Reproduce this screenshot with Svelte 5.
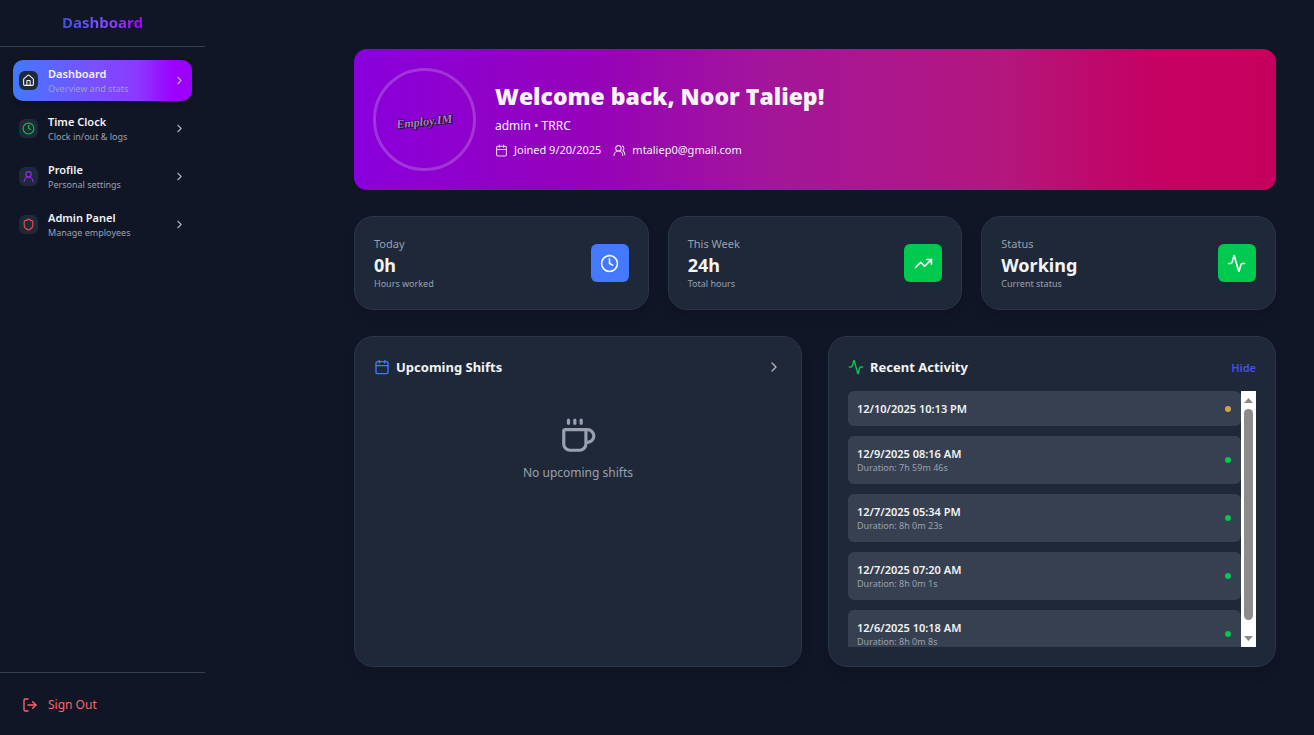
<script>
  import { onMount } from "svelte";

  let activePage = "Dashboard";
  let showActivity = true;

  let list;
  let viewHeight = 256;
  let fullHeight = 256;
  let scrolled = 0;

  const pages = [
    { name: "Dashboard", info: "Overview and stats", icon: "home", color: "white" },
    { name: "Time Clock", info: "Clock in/out & logs", icon: "clock", color: "green" },
    { name: "Profile", info: "Personal settings", icon: "user", color: "purple" },
    { name: "Admin Panel", info: "Manage employees", icon: "shield", color: "red" }
  ];

  const stats = [
    { label: "Today", value: "0h", info: "Hours worked", icon: "clock", color: "blue" },
    { label: "This Week", value: "24h", info: "Total hours", icon: "trend", color: "green" },
    { label: "Status", value: "Working", info: "Current status", icon: "activity", color: "green" }
  ];

  const logs = [
    { time: "12/10/2025 10:13 PM", duration: "" },
    { time: "12/9/2025 08:16 AM", duration: "7h 59m 46s" },
    { time: "12/7/2025 05:34 PM", duration: "8h 0m 23s" },
    { time: "12/7/2025 07:20 AM", duration: "8h 0m 1s" },
    { time: "12/6/2025 10:18 AM", duration: "8h 0m 8s" }
  ];

  const icons = {
    home: ["M15 21v-8a1 1 0 0 0-1-1h-4a1 1 0 0 0-1 1v8", "M3 10a2 2 0 0 1 .709-1.528l7-6a2 2 0 0 1 2.582 0l7 6A2 2 0 0 1 21 10v9a2 2 0 0 1-2 2H5a2 2 0 0 1-2-2z"],
    clock: ["M12 2a10 10 0 1 0 0 20a10 10 0 1 0 0-20", "M12 6v6l4 2"],
    user: ["M12 3a5 5 0 1 0 0 10a5 5 0 1 0 0-10", "M20 21a8 8 0 0 0-16 0"],
    shield: ["M20 13c0 5-3.500 7.500-7.660 8.950a1 1 0 0 1-.670-.010C7.500 20.500 4 18 4 13V6a1 1 0 0 1 1-1c2 0 4.500-1.200 6.240-2.720a1.170 1.170 0 0 1 1.520 0C14.510 3.810 17 5 19 5a1 1 0 0 1 1 1z"],
    trend: ["M16 7h6v6", "m22 7-8.500 8.500-5-5L2 17"],
    activity: ["M22 12h-2.480a2 2 0 0 0-1.930 1.460l-2.350 8.360a.250.250 0 0 1-.480 0L9.240 2.180a.250.250 0 0 0-.480 0l-2.350 8.360A2 2 0 0 1 4.490 12H2"],
    calendar: ["M8 2v4", "M16 2v4", "M5 4h14a2 2 0 0 1 2 2v14a2 2 0 0 1-2 2H5a2 2 0 0 1-2-2V6a2 2 0 0 1 2-2z", "M3 10h18"],
    users: ["M18 21a8 8 0 0 0-16 0", "M10 3a5 5 0 1 0 0 10a5 5 0 1 0 0-10", "M22 20c0-3.370-2-6.500-4-8a5 5 0 0 0-.450-8.300"],
    chevron: ["m9 18 6-6-6-6"],
    coffee: ["M10 2v2", "M14 2v2", "M6 2v2", "M16 8a1 1 0 0 1 1 1v8a4 4 0 0 1-4 4H7a4 4 0 0 1-4-4V9a1 1 0 0 1 1-1h14a4 4 0 1 1 0 8h-1"],
    logout: ["m16 17 5-5-5-5", "M21 12H9", "M9 21H5a2 2 0 0 1-2-2V5a2 2 0 0 1 2-2h4"]
  };

  function measure(){
    if (!list) return;
    viewHeight = list.clientHeight;
    fullHeight = list.scrollHeight;
    scrolled = list.scrollTop;
  }
  function scrollList(step){
    list.scrollTop += step;
  }
  function toggleActivity(){
    showActivity = !showActivity;
  }

  onMount(measure);
</script>

{#snippet icon(name)}
  <svg class="icon" viewBox="0 0 24 24" aria-hidden="true">
    {#each icons[name] as d}
      <path {d} />
    {/each}
  </svg>
{/snippet}

<div class="layout">
  <aside class="sidebar">
    <div class="brand"><span>Dashboard</span></div>

    <nav>
      {#each pages as page}
        <button class="navitem" class:active={activePage == page.name} on:click={() => activePage = page.name}>
          <span class="navicon {page.color}">{@render icon(page.icon)}</span>
          <span class="navtext">
            <strong>{page.name}</strong>
            <small>{page.info}</small>
          </span>
          <span class="navarrow">{@render icon("chevron")}</span>
        </button>
      {/each}
    </nav>

    <div class="signout">
      <button>{@render icon("logout")}Sign Out</button>
    </div>
  </aside>

  <main>
    <section class="banner">
      <div class="avatar">
        <svg viewBox="0 0 96 96" role="img" aria-label="Employ.IM">
          <text class="logoshadow" x="49" y="55" transform="rotate(-6 48 52)">Employ.IM</text>
          <text class="logo" x="48" y="54" transform="rotate(-6 48 52)">Employ.IM</text>
        </svg>
      </div>
      <div class="welcome">
        <h1>Welcome back, Noor Taliep!</h1>
        <p class="role">admin • TRRC</p>
        <div class="meta">
          <span>{@render icon("calendar")}Joined 9/20/2025</span>
          <span>{@render icon("users")}mtaliep0@gmail.com</span>
        </div>
      </div>
    </section>

    <section class="stats">
      {#each stats as stat}
        <div class="card stat">
          <div>
            <p class="label">{stat.label}</p>
            <p class="value">{stat.value}</p>
            <p class="info">{stat.info}</p>
          </div>
          <span class="badge {stat.color}">{@render icon(stat.icon)}</span>
        </div>
      {/each}
    </section>

    <section class="panels">
      <div class="card panel">
        <header>
          <h2 class="shifts">{@render icon("calendar")}Upcoming Shifts</h2>
          <button class="more" aria-label="View shifts">{@render icon("chevron")}</button>
        </header>
        <div class="empty">
          {@render icon("coffee")}
          <p>No upcoming shifts</p>
        </div>
      </div>

      <div class="card panel">
        <header>
          <h2 class="recent">{@render icon("activity")}Recent Activity</h2>
          <button class="hide" on:click={toggleActivity}>{showActivity ? "Hide" : "Show"}</button>
        </header>
        {#if showActivity}
          <div class="scroller">
            <ul bind:this={list} on:scroll={measure}>
              {#each logs as log}
                <li>
                  <div>
                    <p class="time">{log.time}</p>
                    {#if log.duration}
                      <p class="duration">Duration: {log.duration}</p>
                    {/if}
                  </div>
                  <span class="dot" class:open={!log.duration}></span>
                </li>
              {/each}
            </ul>
            <div class="scrollbar">
              <button aria-label="Scroll up" on:click={() => scrollList(-40)}>
                <svg viewBox="0 0 9 5"><path d="M0 5 4.500 0 9 5z" /></svg>
              </button>
              <div class="track">
                <div class="thumb" style="height: {viewHeight / fullHeight * 100}%; top: {scrolled / fullHeight * 100}%"></div>
              </div>
              <button aria-label="Scroll down" on:click={() => scrollList(40)}>
                <svg viewBox="0 0 9 5"><path d="M0 0 4.500 5 9 0z" /></svg>
              </button>
            </div>
          </div>
        {/if}
      </div>
    </section>
  </main>
</div>

<style>
  :global(body){
    background-color: #111627;
  }
  .layout{
    display: flex;
    min-height: 100vh;
    color: #f3f4f6;
    font-family: "Segoe UI", "Noto Sans", sans-serif;
    font-size: 12px;
  }
  h1, h2, p, ul{
    margin: 0;
    padding: 0;
  }
  button{
    padding: 0;
    border: none;
    background: none;
    color: inherit;
    font: inherit;
    cursor: pointer;
  }
  .icon{
    display: block;
    flex-shrink: 0;
    width: 16px;
    height: 16px;
    fill: none;
    stroke: currentColor;
    stroke-width: 2;
    stroke-linecap: round;
    stroke-linejoin: round;
  }

  .sidebar{
    position: sticky;
    top: 0;
    display: flex;
    flex-direction: column;
    flex-shrink: 0;
    width: 205px;
    height: 100vh;
  }
  .brand{
    padding: 12px 0 13px;
    border-bottom: 1px solid #364153;
    text-align: center;
    font-size: 15px;
    line-height: 21px;
    font-weight: 700;
  }
  .brand span{
    background: linear-gradient(to right, #3b50e6, #7c4dff, #a800ff);
    background-clip: text;
    color: transparent;
  }
  nav{
    display: flex;
    flex-direction: column;
    flex-grow: 1;
    gap: 7px;
    padding: 13px;
  }
  .navitem{
    display: flex;
    align-items: center;
    gap: 10px;
    height: 41px;
    padding: 0 6px;
    border-radius: 10px;
    text-align: left;
  }
  .navitem.active{
    background: linear-gradient(to right, #4179ff, #7a50ff 45%, #8c38ff 70%, #9c00ff 90%);
    box-shadow: 0 4px 6px rgba(0,0,0,0.2);
  }
  .navicon{
    display: flex;
    align-items: center;
    justify-content: center;
    width: 19px;
    height: 19px;
    border-radius: 6px;
    background-color: #1e2939;
  }
  .navicon .icon{
    width: 13px;
    height: 13px;
  }
  .navicon.white{ color: #f3f4f6; }
  .navicon.green{ color: #00c950; }
  .navicon.purple{ color: #9a2cf5; }
  .navicon.red{ color: #fb4b50; }
  .navtext{
    display: flex;
    flex-direction: column;
    flex-grow: 1;
    padding-top: 2px;
  }
  .navtext strong{
    font-size: 11px;
    line-height: 14px;
    font-weight: 600;
  }
  .navtext small{
    color: #99a1af;
    font-size: 9px;
    line-height: 15px;
  }
  .navarrow{
    color: #b4b2b4;
  }
  .navarrow .icon{
    width: 13px;
    height: 13px;
  }
  .signout{
    padding: 23px 22px 21px;
    border-top: 1px solid #364153;
  }
  .signout button{
    display: flex;
    align-items: center;
    gap: 10px;
    color: #ff6467;
    line-height: 18px;
  }

  main{
    flex-grow: 1;
    min-width: 0;
    padding: 49px 38px 49px 149px;
  }
  .banner{
    display: flex;
    align-items: center;
    gap: 19px;
    padding: 19px;
    border-radius: 13px;
    background: linear-gradient(to right, #8800dc, #9602b8 26%, #a3169a 45%, #b3177e 70%, #bd0a6c 80%, #c50061 88%, #c6005c);
  }
  .avatar{
    width: 97px;
    height: 97px;
    border: 3px solid rgba(255,255,255,0.2);
    border-radius: 50%;
  }
  .avatar text{
    font-family: "Brush Script MT", "Liberation Serif", serif;
    font-size: 12px;
    font-style: italic;
    font-weight: 700;
    text-anchor: middle;
  }
  .logo{
    fill: #b27acb;
    stroke: #1d1030;
    stroke-width: 1;
    paint-order: stroke;
  }
  .logoshadow{
    fill: #1d1030;
  }
  h1{
    font-family: "Segoe UI", "Open Sans", sans-serif;
    font-size: 23px;
    line-height: 30px;
    font-weight: 800;
  }
  .role{
    margin-top: 5px;
    font-size: 12px;
    line-height: 20px;
  }
  .meta{
    display: flex;
    gap: 12px;
    margin-top: 6px;
    font-size: 11px;
    line-height: 16px;
  }
  .meta span{
    display: flex;
    align-items: center;
    gap: 6px;
  }
  .meta .icon{
    width: 13px;
    height: 13px;
    color: #e3d5ee;
  }

  .card{
    border: 1px solid #2a3547;
    border-radius: 19px;
    background-color: #1f2838;
    box-shadow: 0 8px 12px rgba(0,0,0,0.12);
  }
  .stats{
    display: grid;
    grid-template-columns: repeat(3, 1fr);
    gap: 19px;
    margin-top: 26px;
  }
  .stat{
    display: flex;
    align-items: center;
    justify-content: space-between;
    padding: 19px;
  }
  .label{
    color: #99a1af;
    font-size: 11px;
    line-height: 16px;
  }
  .value{
    font-size: 18px;
    line-height: 26px;
    font-weight: 700;
  }
  .info{
    color: #99a1af;
    font-size: 9px;
    line-height: 12px;
  }
  .badge{
    display: flex;
    align-items: center;
    justify-content: center;
    width: 38px;
    height: 38px;
    border-radius: 6px;
    color: #ffffff;
  }
  .badge.blue{ background-color: #4379ff; }
  .badge.green{ background-color: #00c950; }
  .badge .icon{
    width: 19px;
    height: 19px;
  }

  .panels{
    display: grid;
    grid-template-columns: repeat(2, 1fr);
    gap: 26px;
    margin-top: 26px;
  }
  .panel{
    padding: 19px;
  }
  header{
    display: flex;
    align-items: center;
    justify-content: space-between;
    margin-bottom: 13px;
  }
  h2{
    display: flex;
    align-items: center;
    gap: 6px;
    font-size: 13px;
    line-height: 22px;
    font-weight: 700;
  }
  .shifts .icon{ color: #4379ff; }
  .recent .icon{ color: #00c950; }
  .more{
    color: #b4b2b4;
  }
  .hide{
    color: #4450ea;
    font-size: 11px;
    font-weight: 600;
  }
  .empty{
    display: flex;
    flex-direction: column;
    align-items: center;
    gap: 8px;
    padding-top: 26px;
    color: #99a1af;
    line-height: 19px;
  }
  .empty .icon{
    width: 38px;
    height: 38px;
  }

  .scroller{
    display: flex;
    height: 256px;
  }
  ul{
    display: flex;
    flex-direction: column;
    flex-grow: 1;
    gap: 10px;
    overflow-y: auto;
    scrollbar-width: none;
    list-style: none;
  }
  li{
    display: flex;
    align-items: center;
    justify-content: space-between;
    flex-shrink: 0;
    padding: 10px 10px 10px 9px;
    border-radius: 6px;
    background-color: #374051;
  }
  .time{
    font-size: 11px;
    line-height: 15px;
    font-weight: 600;
  }
  .duration{
    color: #99a1af;
    font-size: 9px;
    line-height: 13px;
  }
  .dot{
    width: 6px;
    height: 6px;
    border-radius: 50%;
    background-color: #00c950;
  }
  .dot.open{
    background-color: #d9a04a;
  }
  .scrollbar{
    display: flex;
    flex-direction: column;
    width: 15px;
    background-color: #ffffff;
  }
  .scrollbar button{
    display: flex;
    align-items: center;
    justify-content: center;
    height: 18px;
  }
  .scrollbar svg{
    width: 9px;
    height: 5px;
    fill: #8b8b8b;
  }
  .track{
    position: relative;
    flex-grow: 1;
  }
  .thumb{
    position: absolute;
    left: 3px;
    width: 9px;
    border-radius: 5px;
    background-color: #8b8b8b;
  }
</style>
